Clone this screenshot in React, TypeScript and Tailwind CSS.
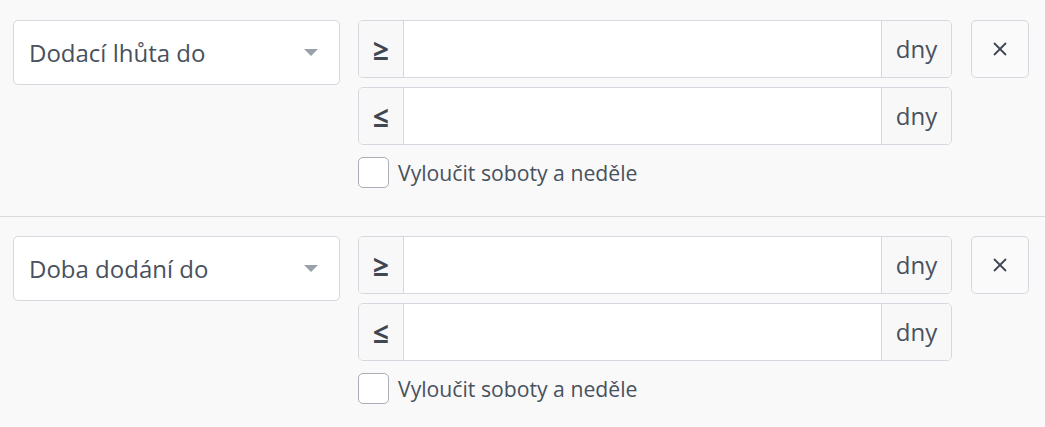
import React from 'react';

const font = { fontFamily: '"Open Sans", "Noto Sans", sans-serif' };

function RangeInput({ sign }: { sign: string }) {
  return (
    <div className="flex h-[58px] rounded-[5px] border border-[#d5d8de] bg-white overflow-hidden">
      <div className="w-[45px] flex items-center justify-center bg-[#f8f8f9] border-r border-[#d5d8de] text-[28px] leading-none font-bold text-[#3f4752]">
        {sign}
      </div>
      <input className="flex-1 min-w-0 outline-none px-3 bg-white" />
      <div className="w-[70px] flex items-center justify-center bg-[#f8f8f9] border-l border-[#d5d8de] text-[24px] text-[#48515e]">
        dny
      </div>
    </div>
  );
}

function Row({ label, last }: { label: string; last?: boolean }) {
  return (
    <div className={`flex pl-[13px] pr-[16px] ${last ? 'pt-[19px] pb-[24px]' : 'pt-[20px] pb-[28px] border-b border-[#d9dbe0]'}`}>
      <div className="w-[327px] h-[65px] rounded-[5px] border border-[#d5d8de] bg-white flex items-center pl-[15px] pr-[21px]">
        <span className="flex-1 text-[24px] text-[#48515e]">{label}</span>
        <svg width="14" height="7" viewBox="0 0 14 7">
          <path d="M0 0 L14 0 L7 7 Z" fill="#9aa0aa" />
        </svg>
      </div>
      <div className="flex-1 ml-[18px] flex flex-col gap-[9px]">
        <RangeInput sign="≥" />
        <RangeInput sign="≤" />
        <label className="flex items-center gap-[9px] mt-[3px] h-[31px]">
          <span className="w-[31px] h-[31px] rounded-[5px] border border-[#a9aeb7] bg-white" />
          <span className="text-[21.2px] leading-none text-[#48515e]">Vyloučit soboty a neděle</span>
        </label>
      </div>
      <button className="ml-[19px] w-[58px] h-[58px] rounded-[5px] border border-[#d5d8de] bg-[#fafafa] flex items-center justify-center">
        <svg width="14" height="14" viewBox="0 0 14 14">
          <path d="M1 1 L13 13 M13 1 L1 13" stroke="#3f4752" strokeWidth="1.8" />
        </svg>
      </button>
    </div>
  );
}

export default function App() {
  return (
    <div className="w-[1045px] h-[427px] bg-[#f9f9f9] overflow-hidden" style={font}>
      <Row label="Dodací lhůta do" />
      <Row label="Doba dodání do" last />
    </div>
  );
}
